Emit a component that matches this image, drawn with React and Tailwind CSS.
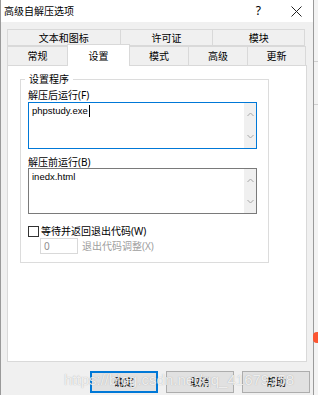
import React from "react";

const font = { fontFamily: '"Noto Sans","Noto Sans CJK SC",sans-serif' };

function Chevron({ up }) {
  return (
    <svg width="7" height="5" viewBox="0 0 7 5" className="block">
      <path
        d={up ? "M0.5 4 L3.5 1 L6.5 4" : "M0.5 1 L3.5 4 L6.5 1"}
        fill="none"
        stroke="#a6a6a6"
        strokeWidth="1"
      />
    </svg>
  );
}

function TextBox({ text, active, h }) {
  return (
    <div
      className={`flex w-[229px] ${h} border ${active ? "border-[#0078d7]" : "border-[#7a7a7a]"} bg-white`}
    >
      <div
        className="flex-1 pl-[3px] pt-[2px] text-[9.5px] leading-[12px] text-black flex items-start"
        style={{ fontFamily: '"Liberation Sans",Arial,sans-serif' }}
      >
        <span>{text}</span>
        {active && <span className="w-px h-[12px] bg-black ml-px" />}
      </div>
      <div className="w-[12px] bg-[#f0f0f0] flex flex-col items-center justify-between py-[9px]">
        <Chevron up />
        <Chevron />
      </div>
    </div>
  );
}

function Tab({ w, label, selected }) {
  return (
    <div
      className={`${w} flex items-center justify-center border-l border-t border-r -mr-px border-[#d9d9d9] text-[10px] leading-[12px] text-black ${
        selected ? "bg-white relative z-10 -mt-[2px] -mb-px h-[22px] border-b-0" : "bg-[#f0f0f0] h-[19px]"
      }`}
    >
      {label}
    </div>
  );
}

export default function App() {
  return (
    <div className="w-[318px] h-[395px] flex bg-[#f0f0f0] overflow-hidden relative" style={font}>
      <div className="w-[314px] h-[395px] flex flex-col border-l border-r border-[#9a9a9a] bg-[#f0f0f0]">
        {/* title bar */}
        <div className="h-[22px] bg-white flex items-center pl-[3px] pr-[11px] text-[10px] text-black">
          <span className="flex-1 leading-[12px]">高级自解压选项</span>
          <span className="text-[12px] mr-[30px] leading-[12px]">?</span>
          <svg width="11" height="11" viewBox="0 0 11 11">
            <path d="M0.5 0.5 L10.5 10.5 M10.5 0.5 L0.5 10.5" stroke="#222" strokeWidth="1" />
          </svg>
        </div>

        {/* body */}
        <div className="flex-1 flex flex-col pt-[7px] pl-[6px]">
          {/* tabs */}
          <div className="flex w-[298px] h-[17px]">
            <div className="w-[114px] h-[17px] -mr-px flex items-center justify-center border-l border-t border-r border-[#d9d9d9] text-[10px] leading-[12px]">文本和图标</div>
            <div className="w-[94px] h-[17px] -mr-px flex items-center justify-center border-l border-t border-r border-[#d9d9d9] text-[10px] leading-[12px]">许可证</div>
            <div className="w-[93px] h-[17px] flex items-center justify-center border-l border-t border-r border-[#d9d9d9] text-[10px] leading-[12px]">模块</div>
          </div>
          <div className="flex w-[298px] items-end h-[19px] border-t border-[#d9d9d9] box-content -mt-px">
            <Tab w="w-[61px]" label="常规" />
            <Tab w="w-[63px]" label="设置" selected />
            <Tab w="w-[60px]" label="模式" />
            <Tab w="w-[60px]" label="高级" />
            <Tab w="w-[59px]" label="更新" />
          </div>

          {/* panel */}
          <div className="w-[300px] h-[297px] bg-white border border-[#d9d9d9] pl-[12px] pt-[7px]">
            <fieldset className="w-[249px] border border-[#dcdcdc] px-[7px] pb-[8px]">
              <legend className="text-[10px] leading-[12px] px-[4px] -ml-[3px] text-black">设置程序</legend>
              <div className="mt-[4px] text-[10px] leading-[12px] text-black">解压后运行(F)</div>
              <div className="mt-[1px]">
                <TextBox text="phpstudy.exe" active h="h-[47px]" />
              </div>
              <div className="mt-[7px] text-[10px] leading-[12px] text-black">解压前运行(B)</div>
              <TextBox text="inedx.html" h="h-[46px]" />
              <div className="mt-[11px] flex items-center h-[12px]">
                <div className="w-[11px] h-[11px] border border-[#333] bg-white" />
                <span className="ml-[2px] text-[10px] leading-[12px] text-black">等待并返回退出代码(W)</span>
              </div>
              <div className="mt-[1px] flex items-center pl-[12px]">
                <div className="w-[38px] h-[16px] border border-[#d9d9d9] bg-white text-[10px] leading-[12px] text-[#909090] pl-[3px] flex items-center">0</div>
                <span className="ml-[4px] text-[10px] leading-[12px] text-[#a0a0a0]">退出代码调整(X)</span>
              </div>
            </fieldset>
          </div>

          {/* buttons */}
          <div className="flex justify-end gap-[8px] mt-[9px] pr-[3px]">
            <button className="w-[68px] h-[22px] bg-[#e1e1e1] border-2 border-[#0078d7] text-[10px] leading-[12px] text-black">确定</button>
            <button className="w-[68px] h-[22px] bg-[#e1e1e1] border border-[#adadad] text-[10px] leading-[12px] text-black">取消</button>
            <button className="w-[68px] h-[22px] bg-[#e1e1e1] border border-[#adadad] text-[10px] leading-[12px] text-black">帮助</button>
          </div>
        </div>
      </div>

      {/* right strip */}
      <div className="flex-1 flex flex-col bg-[#f3f3f3]">
        <div className="h-[62px] border-b border-[#d0d0d0]" />
        <div className="h-[43px] border-b border-[#d0d0d0]" />
      </div>
      <div className="absolute left-[313px] top-[332px] w-[8px] h-[11px] rounded-l-[4px] bg-[#fc5531]" />

      {/* watermark */}
      <div
        className="absolute left-[64px] top-[371px] text-[15px] leading-[18px] text-[rgba(255,255,255,0.8)] whitespace-nowrap pointer-events-none"
        style={{ fontFamily: '"Liberation Sans",Arial,sans-serif', textShadow: "0 0 1px rgba(120,120,120,0.6)" }}
      >
        https://blog.csdn.net/qq_41679358
      </div>
    </div>
  );
}
